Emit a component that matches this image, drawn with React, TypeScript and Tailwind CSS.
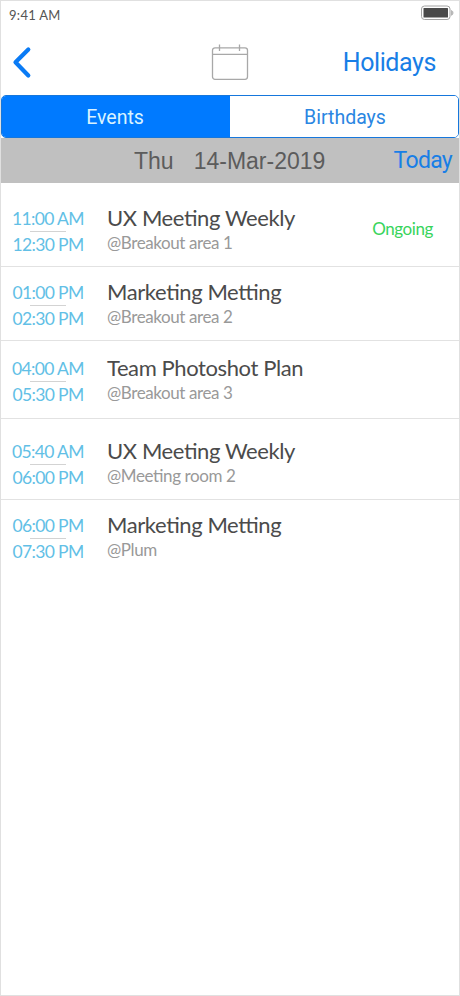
import { useState } from 'react';

type EventItem = {
  id: number;
  start: string;
  end: string;
  title: string;
  place: string;
  status?: string;
  spacing: string;
};

const events: EventItem[] = [
  { id: 1, start: '11:00 AM', end: '12:30 PM', title: 'UX Meeting Weekly', place: '@Breakout area 1', status: 'Ongoing', spacing: 'h-[84px] pt-[21px]' },
  { id: 2, start: '01:00 PM', end: '02:30 PM', title: 'Marketing Metting', place: '@Breakout area 2', spacing: 'h-[74px] pt-[11px]' },
  { id: 3, start: '04:00 AM', end: '05:30 PM', title: 'Team Photoshot Plan', place: '@Breakout area 3', spacing: 'h-[78px] pt-[13px]' },
  { id: 4, start: '05:40 AM', end: '06:00 PM', title: 'UX Meeting Weekly', place: '@Meeting room 2', spacing: 'h-[81px] pt-[18px]' },
  { id: 5, start: '06:00 PM', end: '07:30 PM', title: 'Marketing Metting', place: '@Plum', spacing: 'h-[80px] pt-[11px] border-b-0' },
];

function StatusBar() {
  return (
    <div className="flex h-7 items-start justify-between pl-2 pr-[5px]">
      <span className="mt-1 text-[13px] leading-[20px] tracking-[0.3px] text-[#555]">9:41 AM</span>
      <svg width="34" height="16" viewBox="0 0 34 16" className="mt-1" fill="none">
        <rect x="1.5" y="1" width="28.5" height="13.5" rx="3" stroke="#a3a3a3" />
        <rect x="3.5" y="3" width="24.5" height="9.5" rx="0.5" fill="#4a4a4a" />
        <path d="M31.5 5.5c2 .8 2 4 0 4.8z" fill="#c4c4c4" stroke="#a3a3a3" strokeWidth="0.7" />
      </svg>
    </div>
  );
}

function Header() {
  return (
    <header className="flex h-[66px] items-start justify-between pl-[11px] pr-[23px]">
      <button className="mt-[17px] w-[96px]" aria-label="Back">
        <svg width="20" height="34" viewBox="0 0 20 34" fill="none">
          <path d="M16.3 3.5 3.5 16.3 16.3 29.5" stroke="#0a7bf5" strokeWidth="4.2" strokeLinecap="round" strokeLinejoin="round" />
        </svg>
      </button>
      <svg width="38" height="38" viewBox="0 0 38 38" fill="none" stroke="#a8a8a8" strokeWidth="1.3" className="mt-[15px] ml-[10px]">
        <rect x="1.5" y="3.8" width="35" height="31.5" rx="2.5" />
        <path d="M1.5 10.3h35M8.5 0.5v6.5M28.5 0.5v6.5" />
      </svg>
      <button className="mt-[18px] flex w-[95px] justify-end whitespace-nowrap font-[Roboto,sans-serif] text-[25px] leading-8 tracking-[-0.4px] text-[#187ee6]">
        Holidays
      </button>
    </header>
  );
}

function EventRow({ event }: { event: EventItem }) {
  return (
    <li className={`flex border-b border-[#e2e2e2] pl-[11px] pr-[26px] [font-feature-settings:'liga'_1] ${event.spacing}`}>
      <div className="mt-[2px] flex w-[72px] flex-col items-center whitespace-nowrap text-[17.5px] leading-[25px] tracking-[-0.65px] text-[#62bfe6]">
        <span>{event.start}</span>
        <span className="h-px w-9 bg-[#d3d3d3]" />
        <span>{event.end}</span>
      </div>
      <div className="ml-[23px] flex-1">
        <h2 className="text-[22px] leading-[28px] tracking-[-0.4px] text-[#4b4b4b]">{event.title}</h2>
        <p className="text-[17px] leading-[22px] tracking-[-0.4px] text-[#999]">{event.place}</p>
      </div>
      {event.status && (
        <span className="mt-[14px] text-[17px] leading-[22px] tracking-[-0.4px] text-[#38d45c]">{event.status}</span>
      )}
    </li>
  );
}

export default function App() {
  const [tab, setTab] = useState('Events');

  return (
    <div className="h-[996px] w-[460px] overflow-hidden border border-[#e0e0e0] bg-white font-[Lato,sans-serif]">
      <StatusBar />
      <Header />
      <div className="flex h-[43px] overflow-hidden rounded-[5px] border-[1.5px] border-[#1677dc] bg-white">
        {['Events', 'Birthdays'].map((name) => (
          <button
            key={name}
            onClick={() => setTab(name)}
            className={`flex-1 pt-[2px] font-[Roboto,sans-serif] text-[19.5px] ${
              tab === name ? 'bg-[#007aff] pr-[2px] text-[#d9f3ff]' : 'bg-white pl-[2px] text-[#2a86e2]'
            }`}
          >
            {name}
          </button>
        ))}
      </div>
      <div className="flex h-[45px] items-center bg-[#c0c0c0] pt-[2px] pl-[133px] pr-[7px] font-['Liberation_Sans',sans-serif] text-[23px] text-[#5c5c5c]">
        <span>Thu</span>
        <span className="ml-5">14-Mar-2019</span>
        <button className="ml-auto font-[Roboto,sans-serif] tracking-[-0.7px] text-[#187ee6]">Today</button>
      </div>
      <ul>
        {events.map((event) => (
          <EventRow key={event.id} event={event} />
        ))}
      </ul>
    </div>
  );
}
